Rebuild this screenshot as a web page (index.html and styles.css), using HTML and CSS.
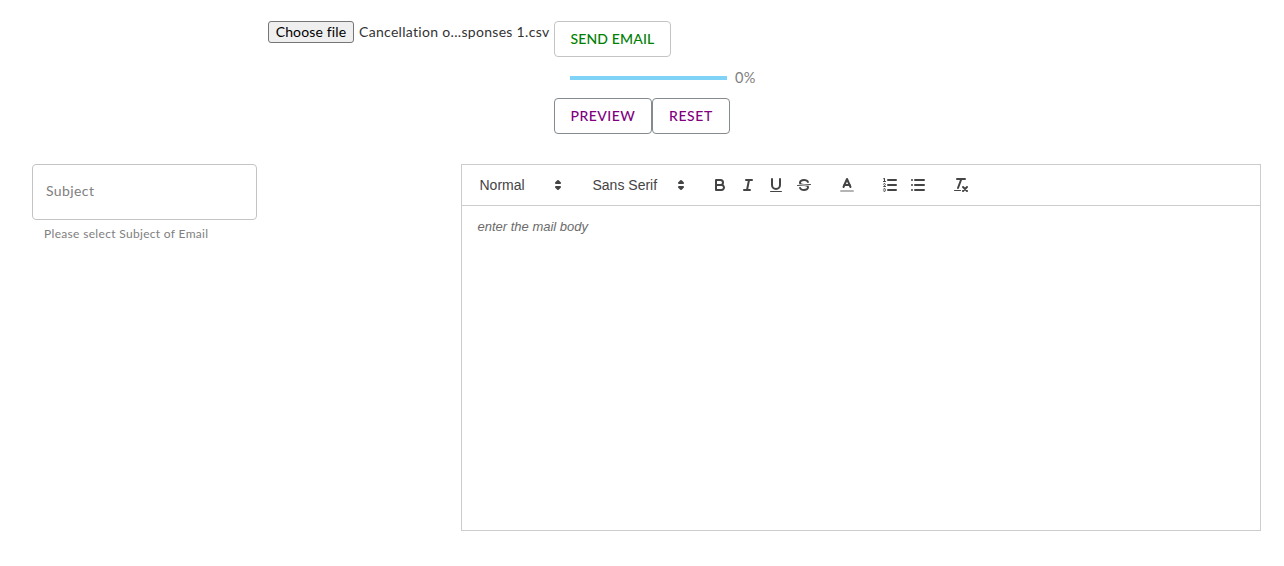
FILE: index.html
```html
<!DOCTYPE html>
<html lang="en">
<head>
<meta charset="utf-8">
<title>Send email</title>
<link rel="stylesheet" href="styles.css">
</head>
<body>
<header class="actions">
  <div class="file">
    <button class="file-button" type="button"><span>Choose file</span></button>
    <span class="file-name">Cancellation o...sponses 1.csv</span>
  </div>
  <div class="controls">
    <button class="btn btn-send" type="button"><span>SEND EMAIL</span></button>
    <div class="progress"><div class="progress-bar"></div><span class="progress-value">0%</span></div>
    <div class="btn-row">
      <button class="btn btn-preview" type="button"><span>PREVIEW</span></button>
      <button class="btn btn-reset" type="button"><span>RESET</span></button>
    </div>
  </div>
</header>
<main class="compose">
  <div class="field">
    <div class="field-box"><span class="field-label">Subject</span></div>
    <p class="field-help">Please select Subject of Email</p>
  </div>
  <section class="editor">
    <div class="toolbar">
      <div class="picker picker-header"><span>Normal</span>
        <svg class="icon" viewBox="0 0 18 18"><polygon class="solid" points="7 11 9 13 11 11 7 11"/><polygon class="solid" points="7 7 9 5 11 7 7 7"/></svg>
      </div>
      <div class="picker picker-font"><span>Sans Serif</span>
        <svg class="icon" viewBox="0 0 18 18"><polygon class="solid" points="7 11 9 13 11 11 7 11"/><polygon class="solid" points="7 7 9 5 11 7 7 7"/></svg>
      </div>
      <div class="group">
        <svg class="icon" viewBox="0 0 18 18"><path d="M5,4H9.5A2.5,2.5,0,0,1,12,6.5v0A2.5,2.5,0,0,1,9.5,9H5A0,0,0,0,1,5,9V4A0,0,0,0,1,5,4Z"/><path d="M5,9h5.5A2.5,2.5,0,0,1,13,11.5v0A2.5,2.5,0,0,1,10.5,14H5a0,0,0,0,1,0,0V9A0,0,0,0,1,5,9Z"/></svg>
        <svg class="icon" viewBox="0 0 18 18"><path d="M7,4H13M5,14H11M8,14L10,4"/></svg>
        <svg class="icon" viewBox="0 0 18 18"><path d="M5,3V9a4.012,4.012,0,0,0,4,4H9a4.012,4.012,0,0,0,4-4V3"/><rect class="fill" height="1" rx="0.5" width="12" x="3" y="15"/></svg>
        <svg class="icon" viewBox="0 0 18 18"><path class="thin" d="M15.5,8.5L2.5,9.5"/><path class="fill" d="M9.007,8C6.542,7.791,6,7.519,6,6.5,6,5.792,7.283,5,9,5c1.571,0,2.765.679,2.969,1.309a1,1,0,0,0,1.9-.617C13.356,4.106,11.354,3,9,3,6.2,3,4,4.538,4,6.5a3.2,3.2,0,0,0,.5,1.843Z"/><path class="fill" d="M8.984,10C11.457,10.208,12,10.479,12,11.5c0,.708-1.283,1.5-3,1.5-1.571,0-2.765-.679-2.969-1.309a1,1,0,1,0-1.9.617C4.644,13.894,6.646,15,9,15c2.8,0,5-1.538,5-3.5a3.2,3.2,0,0,0-.5-1.843Z"/></svg>
      </div>
      <div class="group">
        <svg class="icon" viewBox="0 0 18 18"><path class="faint" d="M3,15H15"/><polyline points="5.5 11 9 3 12.5 11"/><path d="M11.63,9H6.38"/></svg>
      </div>
      <div class="group">
        <svg class="icon" viewBox="0 0 18 18"><path d="M7,4H15M7,9H15M7,14H15"/><path class="thin" d="M2.5,5.5H4.5"/><path class="fill" d="M3.5,6A0.5,0.5,0,0,1,3,5.5V3.085l-0.276.138A0.5,0.5,0,0,1,2.053,3c-0.124-.247-0.023-0.324.224-0.447l1-.5A0.5,0.5,0,0,1,4,2.5v3A0.5,0.5,0,0,1,3.5,6Z"/><path class="thin" d="M4.5,10.5h-2c0-.234,1.85-1.076,1.85-2.234A0.959,0.959,0,0,0,2.5,8.156"/><path class="thin" d="M2.5,14.846a0.959,0.959,0,0,0,1.85-.109A0.7,0.7,0,0,0,3.75,14a0.688,0.688,0,0,0,.6-0.736,0.959,0.959,0,0,0-1.85-.109"/></svg>
        <svg class="icon" viewBox="0 0 18 18"><path d="M6,4H15M6,9H15M6,14H15M3,4H3M3,9H3M3,14H3"/></svg>
      </div>
      <div class="group">
        <svg class="icon" viewBox="0 0 18 18"><path d="M5,3H13M6,12L9.35,3M11,11L15,15M15,11L11,15"/><rect class="fill" height="1" rx="0.5" width="7" x="2" y="14"/></svg>
      </div>
    </div>
    <div class="editor-body"><em>enter the mail body</em></div>
  </section>
</main>
</body>
</html>
```
FILE: styles.css
```css
* { box-sizing: border-box; }

body {
  margin: 0;
  background: #fff;
  color: #333;
  font-family: Lato, "Open Sans", sans-serif;
  font-size: 14px;
}

button { font-family: inherit; white-space: nowrap; }

.actions {
  display: flex;
  align-items: flex-start;
  height: 164px;
  padding: 21px 0 0 268px;
}

.file { display: flex; align-items: center; width: 286px; gap: 5px; }

.file-button {
  width: 86px;
  height: 22px;
  padding: 0;
  border: 1px solid #767676;
  border-radius: 3px;
  background: #efefef;
  color: #000;
  font-size: 14px;
  line-height: 20px;
  letter-spacing: 0.15px;
}

.file-name { white-space: nowrap; letter-spacing: 0.31px; line-height: 22px; }

.btn {
  height: 36px;
  padding: 0 15.5px;
  border: 1px solid #c4c4c4;
  border-radius: 4px;
  background: #fff;
  font-size: 14px;
  font-weight: 500;
  line-height: 34px;
  text-align: left;
}

.btn-send { display: block; width: 117px; color: #008000; letter-spacing: 0.15px; }
.btn-row { display: flex; }
.btn-preview, .btn-reset { border-color: #848a8e; color: #800080; }
.btn-preview { width: 98px; letter-spacing: 0.45px; }
.btn-reset { width: 78px; padding-left: 16px; letter-spacing: 0.6px; }

.progress { display: flex; align-items: center; gap: 8px; height: 41px; padding-left: 16px; }
.progress-bar { width: 157px; height: 4px; background: #7fd3f7; }
.progress-value { color: #808080; font-size: 14.5px; letter-spacing: 0.4px; }

.compose { display: flex; justify-content: space-between; padding: 0 23px 0 32px; }
.field { width: 225px; }

.field-box {
  display: flex;
  align-items: center;
  height: 56px;
  padding: 0 13px 3px;
  border: 1px solid #c4c4c4;
  border-radius: 4px;
}

.field-label { color: #808080; letter-spacing: 0.4px; }

.field-help {
  margin: 4px 12px 0;
  color: #808080;
  font-size: 12px;
  line-height: 20px;
  letter-spacing: 0.32px;
  white-space: nowrap;
}

.editor {
  width: 800px;
  height: 367px;
  border: 1px solid #ccc;
  font-family: "Liberation Sans", Arial, sans-serif;
}

.toolbar {
  display: flex;
  align-items: center;
  gap: 15px;
  height: 41px;
  padding: 8px;
  border-bottom: 1px solid #ccc;
}

.picker {
  display: flex;
  align-items: center;
  justify-content: space-between;
  height: 24px;
  padding: 0 1px 0 9.5px;
  color: #444;
  font-size: 14px;
  font-weight: 500;
  line-height: 22px;
}

.picker-header { width: 98px; }
.picker-font { width: 108px; }

.group { display: flex; gap: 10px; padding: 3px 5px; }

.icon {
  display: block;
  flex: none;
  width: 18px;
  height: 18px;
  fill: none;
  stroke: #444;
  stroke-width: 2;
  stroke-linecap: round;
  stroke-linejoin: round;
}

.icon .solid { fill: #444; }
.icon .fill { fill: #444; stroke: none; }
.icon .thin { stroke-width: 1; }
.icon .faint { opacity: 0.4; }

.editor-body { padding: 12px 15.5px; color: #6b6b6b; font-size: 13px; line-height: 18px; }
```
